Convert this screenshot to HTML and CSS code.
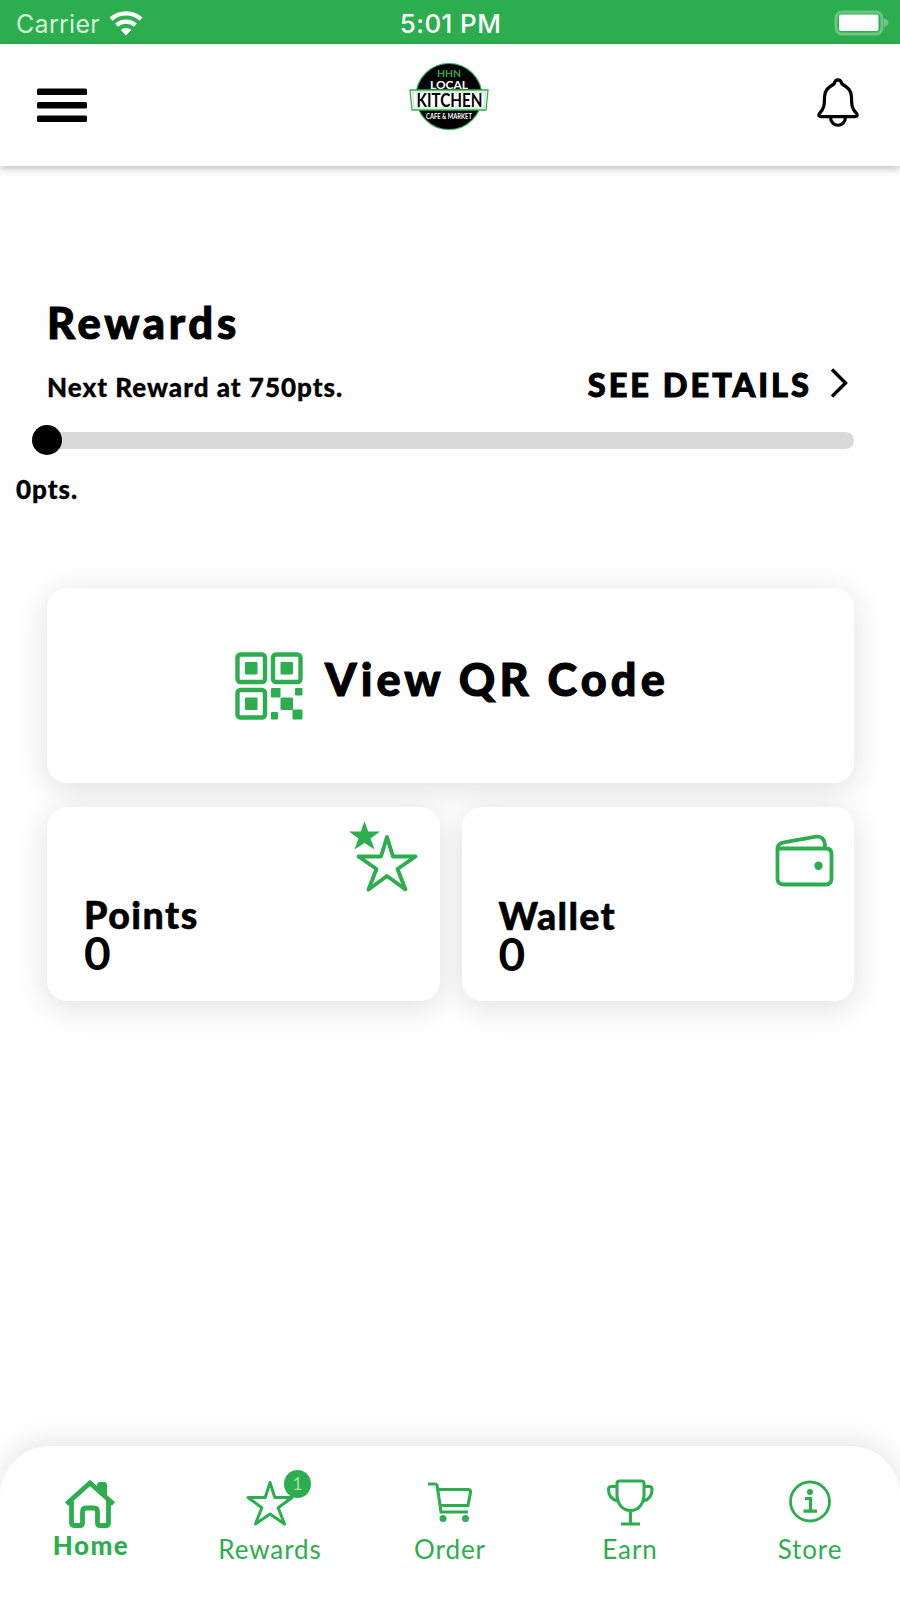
FILE: index.html
```html
<!DOCTYPE html>
<html lang="en">
<head>
<meta charset="utf-8">
<title>Local Kitchen Rewards</title>
<link rel="stylesheet" href="styles.css">
</head>
<body>
<div class="screen">
  <div class="status">
    <div class="status-left">
      <span class="carrier">Carrier</span>
      <svg class="wifi" width="34" height="26" viewBox="0 0 34 26">
        <path d="M17 25.5l-5.2-5.6c2.9-2.6 7.5-2.6 10.4 0z" fill="#fff"/>
        <path d="M7.6 15.2c5.4-4.7 13.400-4.700 18.800 0M2 9.100c8.500-7.700 21.500-7.700 30 0" fill="none" stroke="#fff" stroke-width="4.300"/>
      </svg>
    </div>
    <span class="time">5:01 PM</span>
    <svg class="battery" width="56" height="26" viewBox="0 0 56 26">
      <rect x="2" y="2" width="46" height="22" rx="6" fill="none" stroke="#6cc783" stroke-width="3"/>
      <rect x="5" y="4.500" width="39.500" height="16.500" rx="2" fill="#fff"/>
      <path d="M50 8.500c6 1.500 6 7 0 8.500z" fill="#6cc783"/>
    </svg>
  </div>

  <header class="header">
    <svg class="menu" width="50" height="36" viewBox="0 0 50 36">
      <rect y="0.500" width="50" height="6.500" rx="1.500"/><rect y="14" width="50" height="6.500" rx="1.500"/><rect y="27.500" width="50" height="6.500" rx="1.500"/>
    </svg>
    <svg class="logo" width="80" height="68" viewBox="0 0 80 68">
      <circle cx="40" cy="34.500" r="33" fill="#000" stroke="#2dae4e" stroke-width="1.200"/>
      <path d="M1 28L79 28 77 48 3 48z" fill="#fff" stroke="#2dae4e" stroke-width="1.300"/>
      <path d="M3.500 30L76.500 30 75 46 5 46z" fill="none" stroke="#8fc99d" stroke-width=".6"/>
      <text class="logo-text" x="28" y="15" textLength="24" lengthAdjust="spacingAndGlyphs" font-size="10" fill="#2dae4e">HHN</text>
      <text class="logo-text" x="21" y="26.500" textLength="38" lengthAdjust="spacingAndGlyphs" font-size="11.500" fill="#fff">LOCAL</text>
      <text class="logo-text" x="7.500" y="44.700" textLength="66" lengthAdjust="spacingAndGlyphs" font-size="18" fill="#000">KITCHEN</text>
      <text class="logo-text" x="17" y="56.500" textLength="46" lengthAdjust="spacingAndGlyphs" font-size="7" fill="#fff">CAFE &amp; MARKET</text>
    </svg>
    <svg class="bell" width="42" height="50" viewBox="0 0 42 50">
      <path d="M17 6C18.500 .5 23.500 .5 25 6C31 9.500 34.500 12.500 34.500 19C34.500 27 35 31 39.500 35.500C41 37.200 39.800 38.700 38 38.700H4C2.200 38.700 1 37.200 2.500 35.500C7 31 7.500 27 7.500 19C7.500 12.500 11 9.500 17 6ZM13.500 39C13.500 50 28.500 50 28.500 39" fill="none" stroke="#000" stroke-width="3.200"/>
    </svg>
  </header>

  <main class="main">
    <h1 class="title heavy">Rewards</h1>
    <div class="reward-row">
      <span class="next">Next Reward at 750pts.</span>
      <a class="details heavy"><span>SEE DETAILS</span>
        <svg width="18" height="30" viewBox="0 0 18 30"><path d="M2 1.500L15.500 15 2 28.500" fill="none" stroke="#000" stroke-width="3.400"/></svg>
      </a>
    </div>
    <div class="track"><span class="thumb"></span></div>
    <div class="current">0pts.</div>

    <section class="cards">
      <div class="card qr">
        <svg class="qr-icon" width="68" height="68" viewBox="0 0 68 68">
          <g fill="none" stroke="#2dae4e" stroke-width="4.400"><rect x="2.500" y="2.500" width="27.500" height="27.500" rx="3"/><rect x="38" y="2.500" width="27.500" height="27.500" rx="3"/><rect x="2.500" y="38" width="27.500" height="27.500" rx="3"/></g>
          <g fill="#2dae4e"><rect x="10" y="10" width="12.500" height="12.500" rx="1"/><rect x="45.500" y="10" width="12.500" height="12.500" rx="1"/><rect x="10" y="45.500" width="12.500" height="12.500" rx="1"/>
          <rect x="36" y="36" width="9.500" height="9.500" rx="1"/><rect x="60" y="36" width="7.500" height="7.500" rx="1"/><rect x="45.500" y="45.500" width="12.500" height="12.500" rx="1"/><rect x="36" y="60" width="7" height="7.500" rx="1"/><rect x="57.500" y="57.500" width="10" height="10" rx="1"/></g>
        </svg>
        <span class="qr-label heavy">View QR Code</span>
      </div>
      <div class="card stat">
        <svg class="stars" width="70" height="74" viewBox="0 0 70 74">
          <path d="M15.500 1L19.200 11.500H31L21.500 18.500 25.500 29.500 15.500 23 5.500 29.500 9.500 18.500 0 11.500H11.800z" fill="#2dae4e"/>
          <path d="M38 17L44 36.500H66.500L48.500 49 56.500 69.500 38 56 19.500 69.500 27.500 49 9.500 36.500H32z" fill="none" stroke="#2dae4e" stroke-width="3.900" stroke-linejoin="round"/>
        </svg>
        <div class="stat-name">Points</div>
        <div class="stat-value">0</div>
      </div>
      <div class="card stat wallet">
        <svg class="wallet-icon" width="60" height="54" viewBox="0 0 60 54">
          <g fill="none" stroke="#2dae4e" stroke-width="3.800"><path d="M2.500 14.500H51Q56.500 14.500 56.500 20V44.500Q56.500 50.500 50.500 50.500H8.500Q2.500 50.500 2.500 44.500V14.500C2.500 11 5 9 9 8.300L41 2.700C46.500 1.800 50 5.500 50 12.500"/></g>
          <circle cx="43.500" cy="31.700" r="4.200" fill="#2dae4e"/>
        </svg>
        <div class="stat-name">Wallet</div>
        <div class="stat-value">0</div>
      </div>
    </section>
  </main>

  <nav class="nav">
    <a class="tab active">
      <svg width="52" height="50" viewBox="0 0 52 50">
        <path d="M33 6.500Q33 3 36 3H40Q43 3 43 6.500V18L33 9z" fill="#2dae4e"/>
        <path d="M2.500 25L26 4 49.500 25M7.500 22V43.500Q7.500 46.500 10.500 46.500H16Q18.500 46.500 18.500 44V33Q18.500 29 22 29H30Q33.500 29 33.500 33V44Q33.500 46.500 36 46.500H42Q44.500 46.500 44.500 43.500V22" fill="none" stroke="#2dae4e" stroke-width="4.800"/>
      </svg>
      <span>Home</span>
    </a>
    <a class="tab">
      <svg width="52" height="50" viewBox="0 0 52 50">
        <path d="M26 3.500L30.800 18.500H48L34.200 28.700 40.500 45 26 35 11.500 45 17.800 28.700 4 18.500H21.200z" fill="none" stroke="#2dae4e" stroke-width="3" stroke-linejoin="round"/>
        <path d="M42 17h9l-8 7z" fill="#2dae4e"/>
      </svg>
      <span>Rewards</span>
      <b class="badge">1</b>
    </a>
    <a class="tab">
      <svg width="52" height="50" viewBox="0 0 52 50">
        <path d="M4 5H11Q13 5 13.300 7.500L17 33H44M13.500 10.500H44Q47 10.500 46.500 13.500L44 26.500H17" fill="none" stroke="#2dae4e" stroke-width="3.100"/>
        <circle cx="19" cy="39.500" r="3.500" fill="#2dae4e"/><circle cx="41.500" cy="39.500" r="3.500" fill="#2dae4e"/>
      </svg>
      <span>Order</span>
    </a>
    <a class="tab">
      <svg width="52" height="50" viewBox="0 0 52 50">
        <path d="M13 4.500Q13 2 15.500 2H37.500Q40 2 40 4.500V15C40 25 34.500 31.500 26.500 31.500S13 25 13 15ZM13 7.500H7Q4.500 7.500 4.500 10.500C4.500 17 8 20.500 13.500 22M40 7.500H45.500Q48 7.500 48 10.500C48 17 45 20.500 39.500 22M26.500 32V45M17 45H36" fill="none" stroke="#2dae4e" stroke-width="3.100"/>
      </svg>
      <span>Earn</span>
    </a>
    <a class="tab">
      <svg width="52" height="50" viewBox="0 0 52 50">
        <circle cx="26" cy="22.500" r="19.500" fill="none" stroke="#2dae4e" stroke-width="2.800"/>
        <circle cx="26" cy="13" r="3" fill="#2dae4e"/><path d="M21 19.500H26.500V32M19.500 32.200H33" fill="none" stroke="#2dae4e" stroke-width="3.200"/>
      </svg>
      <span>Store</span>
    </a>
  </nav>
</div>
</body>
</html>
```
FILE: styles.css
```css
* { box-sizing: border-box; }
body { margin: 0; background: #fefefe; font-family: Lato, sans-serif; color: #000; }
.screen { width: 900px; height: 1598px; display: flex; flex-direction: column; overflow: hidden; }
.heavy { -webkit-text-stroke: 1px currentColor; }

.status { height: 44px; flex: none; background: #2dae4e; color: #fff; display: grid; grid-template-columns: 1fr auto 1fr; align-items: center; padding: 4px 10px 0 16px; font-family: Inter, sans-serif; font-size: 25px; line-height: 30px; }
.status-left { display: flex; align-items: center; gap: 9px; }
.carrier { color: #d5efdb; letter-spacing: 0.3px; }
.wifi { margin-top: -2px; }
.time { font-size: 26px; font-weight: 500; letter-spacing: 0.4px; margin-left: -5px; }
.battery { justify-self: end; margin-top: -3px; }

.header { height: 122px; flex: none; display: grid; grid-template-columns: 1fr auto 1fr; align-items: start; padding: 18px 40px 0 38px; background: #fff; box-shadow: 0 3px 7px rgba(0, 0, 0, 0.24); }
.menu { margin-top: 26px; margin-left: -1px; }
.bell { margin-top: 16px; margin-right: 1px; justify-self: end; }
.logo { overflow: visible; }
.logo-text { font-family: Lato, sans-serif; font-weight: 700; }

.main { flex: 1; padding: 130px 46px 0 47px; }
.title { margin: 0; font-size: 43.5px; line-height: 52px; font-weight: 900; letter-spacing: 3.7px; }
.reward-row { display: flex; justify-content: space-between; align-items: baseline; margin-top: 17px; height: 40px; }
.next { font-size: 26px; line-height: 30px; font-weight: 900; letter-spacing: 1px; -webkit-text-stroke: 0.3px currentColor; }
.details { display: flex; align-items: center; gap: 18px; font-size: 32.5px; line-height: 40px; font-weight: 900; letter-spacing: 3px; padding-right: 6px; }
.details svg { margin-top: -4px; }
.track { position: relative; height: 17px; margin: 27px 0 0; border-radius: 9px; background: #d9d9d9; }
.thumb { position: absolute; left: -15px; top: -7px; width: 30px; height: 30px; border-radius: 50%; background: #000; }
.current { margin: 25px 0 0 -31px; font-size: 26px; line-height: 30px; font-weight: 900; letter-spacing: 1px; -webkit-text-stroke: 0.3px currentColor; }

.cards { display: grid; grid-template-columns: 1fr 1fr; grid-template-rows: 195px 194px; gap: 24px 22px; margin-top: 84px; }
.card { position: relative; background: #fff; border-radius: 20px; box-shadow: 0 6px 30px rgba(0, 0, 0, 0.12); }
.qr { grid-column: 1 / 3; display: flex; align-items: flex-start; padding: 64px 0 0 188px; gap: 22px; }
.qr-label { font-size: 45px; line-height: 54px; font-weight: 900; letter-spacing: 4.1px; }
.stat { padding: 89px 0 0 37px; }
.stat-name { font-size: 37.5px; line-height: 38px; font-weight: 900; letter-spacing: 1.5px; -webkit-text-stroke: 0.5px currentColor; }
.stat-value { font-size: 46px; line-height: 38px; font-weight: 700; }
.wallet { padding-top: 90px; }
.wallet .stat-name { letter-spacing: 1.3px; }
.stars { position: absolute; right: 21px; top: 13px; }
.wallet-icon { position: absolute; right: 19px; top: 27px; }

.nav { height: 152px; flex: none; display: grid; grid-template-columns: repeat(5, 1fr); background: #fff; border-radius: 50px 50px 0 0; box-shadow: 0 -4px 26px rgba(0, 0, 0, 0.1); padding-top: 33px; }
.tab { position: relative; display: flex; flex-direction: column; align-items: center; color: #2dae4e; font-size: 26px; line-height: 32px; letter-spacing: 0.9px; gap: 4px; }
.active { font-weight: 900; letter-spacing: 1.5px; gap: 0; }
.active span { margin-left: 2px; }
.badge { position: absolute; left: 104px; top: -9px; width: 27px; height: 28px; border-radius: 50%; background: #2dae4e; color: #a9dfb6; font-size: 17px; line-height: 28px; font-weight: 400; text-align: center; letter-spacing: 0; }
```
